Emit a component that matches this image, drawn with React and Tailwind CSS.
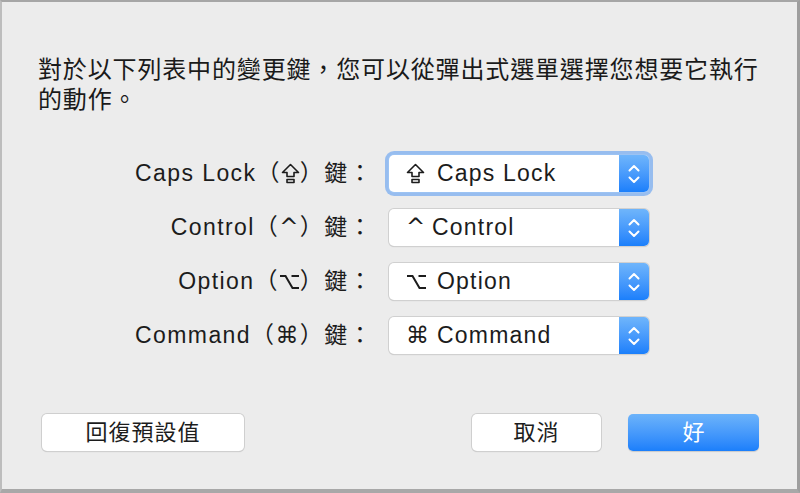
import React from "react";

const FONT = { fontFamily: '"Liberation Sans", "Noto Sans CJK TC", "DejaVu Sans", sans-serif' };

function CapsIcon() {
  return (
    <svg width="19" height="21" viewBox="0 0 19 21" fill="none" stroke="#1c1c1c" strokeWidth="1.6" strokeLinejoin="round" className="inline-block align-[-3px]">
      <path d="M9.5 1.5 L17.5 9.5 H13 V13.5 H6 V9.5 H1.5 Z" />
      <path d="M6 16.5 H13 V19.5 H6 Z" />
    </svg>
  );
}

function OptionIcon() {
  return (
    <svg width="21" height="18" viewBox="0 0 21 18" fill="none" stroke="#1c1c1c" strokeWidth="2" strokeLinejoin="miter" className="inline-block align-[-2px]">
      <path d="M1 3 H6.5 L13.5 15 H20" />
      <path d="M12.5 3 H20" />
    </svg>
  );
}

function Stepper() {
  return (
    <div className="w-[30px] h-full rounded-r-[5px] bg-gradient-to-b from-[#6fb5fb] to-[#1a7ffb] flex items-center justify-center">
      <svg width="14" height="24" viewBox="0 0 14 24" fill="none" stroke="white" strokeWidth="2" strokeLinecap="round" strokeLinejoin="round">
        <path d="M2.5 8.5 L7 4 L11.5 8.5" />
        <path d="M2.5 15.5 L7 20 L11.5 15.5" />
      </svg>
    </div>
  );
}

function Popup({ icon, iconW, text, focused }) {
  return (
    <div
      className={
        "w-[260px] h-[37px] flex rounded-[5px] bg-white " +
        (focused
          ? "shadow-[0_0_0_1px_#9cc3f3,0_0_0_4px_rgba(130,178,240,0.8)]"
          : "shadow-[0_0_0_1px_#d0d0d0,0_1px_1px_rgba(0,0,0,0.2)]")
      }
    >
      <div className="flex-1 flex items-center pl-[17px] text-[23px] tracking-[1.2px] text-[#1c1c1c]">
        <span className="inline-flex items-center" style={{ width: iconW, fontFamily: '"DejaVu Sans", sans-serif' }}>{icon}</span>
        <span>{text}</span>
      </div>
      <Stepper />
    </div>
  );
}

function Row({ name, sym, icon, iconW, text, focused }) {
  return (
    <div className="flex items-center h-[37px]">
      <div className="w-[335px] text-right text-[23px] tracking-[1.4px] text-[#1c1c1c] whitespace-nowrap">
        {name}（<span style={{ fontFamily: '"DejaVu Sans", sans-serif' }}>{sym}</span>）鍵：
      </div>
      <div className="ml-[16px]">
        <Popup icon={icon} iconW={iconW} text={text} focused={focused} />
      </div>
    </div>
  );
}

export default function App() {
  return (
    <div
      className="w-[800px] h-[493px] bg-[#ececec] border-t-2 border-t-[#a6a6a6] border-l-2 border-l-[#bdbdbd] border-r-[3px] border-r-[#9e9e9e] border-b-4 border-b-[#a8a8a8] flex flex-col"
      style={FONT}
    >
      <div className="pl-[36px] pr-[30px] pt-[53px] text-[24px] leading-[30px] tracking-[0.85px] text-[#1a1a1a]">
        <p>對於以下列表中的變更鍵，您可以從彈出式選單選擇您想要它執行</p>
        <p>的動作。</p>
      </div>
      <div className="pl-[36px] mt-[40px] flex flex-col gap-[17px]">
        <Row name="Caps Lock" sym={<CapsIcon />} icon={<CapsIcon />} iconW="31px" text="Caps Lock" focused />
        <Row name="Control" sym="^" icon="^" iconW="26px" text="Control" />
        <Row name="Option" sym={<OptionIcon />} icon={<OptionIcon />} iconW="31px" text="Option" />
        <Row name="Command" sym="⌘" icon="⌘" iconW="31px" text="Command" />
      </div>
      <div className="mt-[60px] flex items-center pl-[40px] pr-[38px]">
        <button className="w-[202px] h-[37px] bg-white rounded-[5px] shadow-[0_0_0_1px_#cfcfcf,0_1px_1px_rgba(0,0,0,0.2)] text-[22px] text-[#1c1c1c] tracking-[1px]">
          回復預設值
        </button>
        <div className="flex-1" />
        <button className="w-[129px] h-[37px] bg-white rounded-[5px] shadow-[0_0_0_1px_#cfcfcf,0_1px_1px_rgba(0,0,0,0.2)] text-[22px] text-[#1c1c1c] tracking-[1px]">
          取消
        </button>
        <button className="ml-[27px] w-[131px] h-[37px] rounded-[5px] bg-gradient-to-b from-[#6cb3fa] to-[#1a7ffb] text-[22px] text-white shadow-[0_1px_1px_rgba(0,0,0,0.15)]">
          好
        </button>
      </div>
    </div>
  );
}
